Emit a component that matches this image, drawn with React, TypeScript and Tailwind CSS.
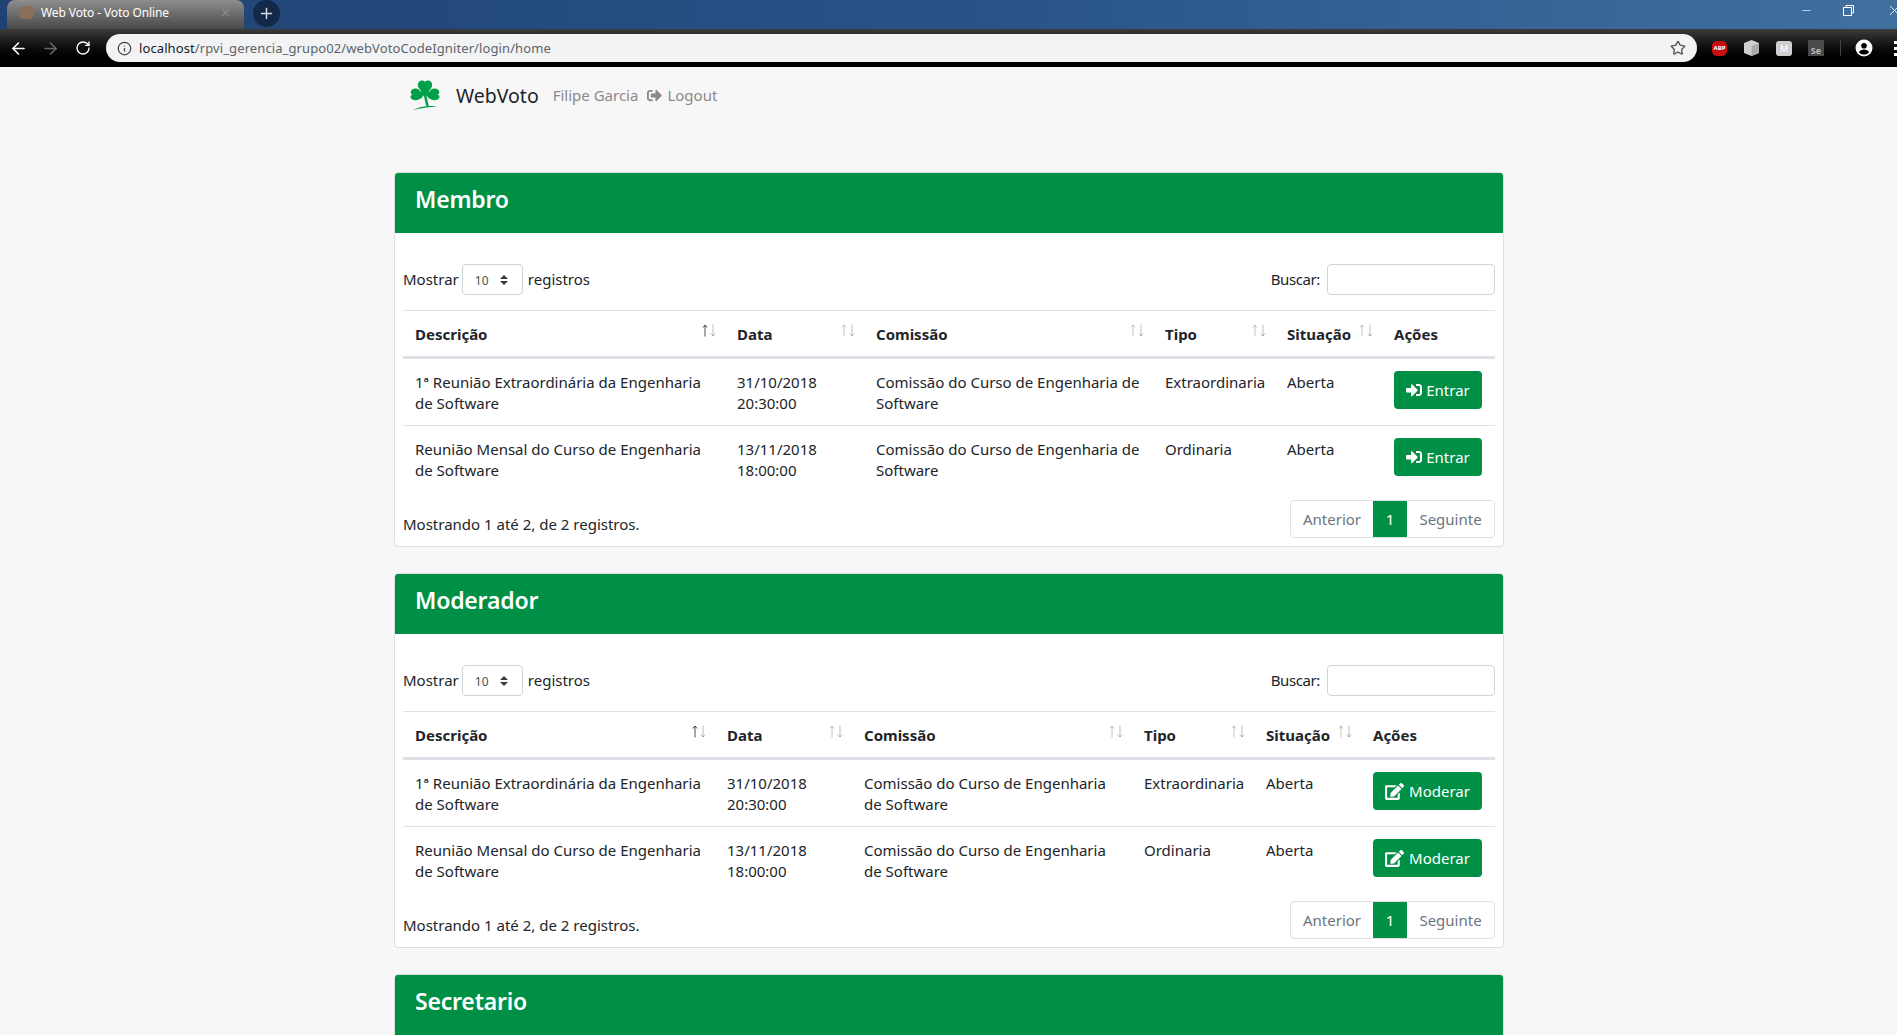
import { FaEdit, FaSignInAlt, FaSignOutAlt } from "react-icons/fa";
import { ArrowLeft, ArrowRight, Info, RotateCw, Star, X, Minus, Plus } from "lucide-react";

type Row = { desc: string; date: string; time: string; tipo: string };

const rows: Row[] = [
  { desc: "1ª Reunião Extraordinária da Engenharia de Software", date: "31/10/2018", time: "20:30:00", tipo: "Extraordinaria" },
  { desc: "Reunião Mensal do Curso de Engenharia de Software", date: "13/11/2018", time: "18:00:00", tipo: "Ordinaria" },
];

function Shamrock() {
  return (
    <svg width="32" height="32" viewBox="0 0 32 32" aria-hidden>
      <g fill="#00a04a">
        <ellipse cx="13" cy="6" rx="4.200" ry="4.600" />
        <ellipse cx="19" cy="6" rx="4.200" ry="4.600" />
        <path d="M10 8.500h12l-4 7.500h-4z" />
        <ellipse cx="6.500" cy="13" rx="4.800" ry="3.600" />
        <ellipse cx="6.500" cy="18" rx="5" ry="3.200" />
        <path d="M7 10l9 5-4 4.500-5 1.500z" />
        <ellipse cx="25.500" cy="13" rx="4.800" ry="3.600" />
        <ellipse cx="25.500" cy="18" rx="5" ry="3.200" />
        <path d="M25 10l-9 5 4 4.500 5 1.500z" />
        <path d="M14.500 15h2.500l2.800 12h-2.600z" />
        <path d="M4 31c4-2 8-3 13-3.700 4-.4 8-.4 11 .2-8 .6-16 1.800-24 3.500z" />
      </g>
    </svg>
  );
}

function SortArrows({ active }: { active?: boolean }) {
  return (
    <svg className="absolute top-[13px] right-[9px]" width="14" height="13" viewBox="0 0 14 13" fill="none" stroke="#212529" aria-hidden>
      <g opacity={active ? 0.8 : 0.25}>
        <path d="M3 12.500V1M.8 3.500 3 1l2.200 2.500" />
      </g>
      <g opacity="0.3">
        <path d="M11 .5V12M8.800 9.500 11 12l2.200-2.500" />
      </g>
    </svg>
  );
}

function Th({ label, active, sort = true }: { label: string; active?: boolean; sort?: boolean }) {
  return (
    <th className="relative border-t border-b-[3px] border-t-[#dee2e6] border-b-[#dee2e6] px-3 pt-[13px] pb-[11px] text-left align-bottom font-bold leading-[21px]">
      {label}
      {sort ? <SortArrows active={active} /> : null}
    </th>
  );
}

function DataCard({
  title,
  action,
  widths,
}: {
  title: string;
  action: "entrar" | "moderar";
  widths: string[];
}) {
  return (
    <section className="mb-[26px] w-[1110px] overflow-hidden rounded-[4px] border border-[#dfdfdf] bg-white">
      <h2 className="-mx-px -mt-px h-[61px] bg-[#009045] px-[21px] pt-[11px] text-[23px] leading-[32px] font-semibold tracking-[-0.2px] text-white">
        {title}
      </h2>
      <div className="px-[8px] pt-[31px] pb-[8px]">
        <div className="flex items-center justify-between">
          <div className="flex items-center gap-[3px]">
            <span>Mostrar</span>
            <div className="flex h-[31px] w-[61px] items-center justify-between rounded-[4px] border border-[#ced4da] pr-[14px] pl-[12px] text-[12px] text-[#495057]">
              <span className="pt-[2px]">10</span>
              <span className="flex flex-col gap-[2px]">
                <span className="h-0 w-0 border-x-[4px] border-b-[4px] border-x-transparent border-b-[#343a40]" />
                <span className="h-0 w-0 border-x-[4px] border-t-[4px] border-x-transparent border-t-[#343a40]" />
              </span>
            </div>
            <span className="ml-[2px]">registros</span>
          </div>
          <div className="flex items-center gap-[7px]">
            <span className="tracking-[-0.4px]">Buscar:</span>
            <input className="h-[31px] w-[168px] rounded-[4px] border border-[#ced4da] bg-white" />
          </div>
        </div>
        <table className="mt-[15px] w-[1092px] table-fixed border-collapse">
          <colgroup>
            <col className={widths[0]} />
            <col className={widths[1]} />
            <col className={widths[2]} />
            <col className={widths[3]} />
            <col className={widths[4]} />
            <col className={widths[5]} />
          </colgroup>
          <thead>
            <tr>
              <Th label="Descrição" active />
              <Th label="Data" />
              <Th label="Comissão" />
              <Th label="Tipo" />
              <Th label="Situação" />
              <Th label="Ações" sort={false} />
            </tr>
          </thead>
          <tbody>
            {rows.map((r, i) => (
              <tr key={r.date} className={i > 0 ? "border-t border-[#dee2e6]" : ""}>
                <td className="px-3 pt-[13px] pb-[11px] align-top">{r.desc}</td>
                <td className="px-3 pt-[13px] pb-[11px] align-top">
                  {r.date}
                  <br />
                  {r.time}
                </td>
                <td className="px-3 pt-[13px] pb-[11px] align-top">Comissão do Curso de Engenharia de Software</td>
                <td className="px-3 pt-[13px] pb-[11px] align-top">{r.tipo}</td>
                <td className="px-3 pt-[13px] pb-[11px] align-top">Aberta</td>
                <td className="px-3 py-[12px] align-top">
                  {action === "entrar" ? (
                    <button className="flex h-[38px] w-[88px] items-center justify-center gap-[4px] rounded-[4px] bg-[#009045] text-white">
                      <FaSignInAlt size={16} />
                      Entrar
                    </button>
                  ) : (
                    <button className="flex h-[38px] w-[109px] items-center justify-center gap-[5px] rounded-[4px] bg-[#009045] text-white">
                      <FaEdit size={19} />
                      Moderar
                    </button>
                  )}
                </td>
              </tr>
            ))}
          </tbody>
        </table>
        <div className="mt-[8px] flex items-start justify-between">
          <span className="pt-[14px]">Mostrando 1 até 2, de 2 registros.</span>
          <div className="flex h-[38px] overflow-hidden rounded-[4px] border border-[#dee2e6] text-[#6c757d]">
            <span className="flex w-[82px] items-center justify-center">Anterior</span>
            <span className="flex w-[34px] items-center justify-center bg-[#009045] text-white">1</span>
            <span className="flex w-[87px] items-center justify-center">Seguinte</span>
          </div>
        </div>
      </div>
    </section>
  );
}

function BrowserChrome() {
  return (
    <header className="h-[67px] bg-black font-['Noto_Sans',sans-serif]">
      <div className="flex h-[29px] bg-gradient-to-r from-[#1f4272] via-[#285287] to-[#41709f]">
        <div className="ml-[7px] flex h-[29px] w-[237px] items-center rounded-t-[8px] bg-gradient-to-b from-[#8e8e8e] to-[#4a4a4a] pr-[12px] pb-[4px] pl-[12px] text-[12px] text-white">
          <span className="mr-[7px] h-[13px] w-[15px] rounded-[5px] bg-[#8a7058]" />
          <span className="flex-1 tracking-[-0.1px]">Web Voto - Voto Online</span>
          <X size={13} className="text-[#8a8a8a]" />
        </div>
        <div className="ml-[9px] flex h-[27px] w-[27px] items-center justify-center rounded-full bg-[#12294a] text-[#d8dde5]">
          <Plus size={17} />
        </div>
        <div className="ml-auto flex h-[20px] items-center gap-[32px] text-white">
          <Minus size={13} strokeWidth={1.2} className="-mr-[2px]" />
          <svg width="11" height="11" viewBox="0 0 11 11" fill="none" stroke="currentColor" aria-hidden>
            <rect x="0.500" y="2.500" width="8" height="8" />
            <path d="M3 2.500V0.500h7.500V8H8.500" />
          </svg>
          <X size={17} strokeWidth={1.2} className="-mr-[6px]" />
        </div>
      </div>
      <div className="flex h-[38px] items-center bg-gradient-to-b from-[#3c3c3c] via-[#0d0d0d] to-black text-white">
        <ArrowLeft size={19} className="ml-[9px]" />
        <ArrowRight size={19} className="ml-[13px] text-[#6a6a6a]" />
        <RotateCw size={16} className="ml-[15px]" />
        <div className="ml-[15px] flex h-[28px] w-[1591px] items-center rounded-full bg-[#f1f3f4] pr-[11px] pl-[11px] text-[13px] text-[#5f6368]">
          <Info size={15} className="mr-[7px] text-[#444]" />
          <span className="flex-1 tracking-[0.1px]">
            <span className="text-[#202124]">localhost</span>/rpvi_gerencia_grupo02/webVotoCodeIgniter/login/home
          </span>
          <Star size={16} className="text-[#555]" />
        </div>
        <span className="ml-[15px] flex h-[15px] w-[15px] items-center justify-center rounded-[5px] bg-[#c70d0d] text-[6px] font-bold text-white">
          ABP
        </span>
        <svg className="ml-[17px]" width="15" height="16" viewBox="0 0 15 16" aria-hidden>
          <path d="M7.500 0 15 3v10l-7.500 3L0 13V3z" fill="#cfcfcf" />
          <path d="M7.500 6 15 3v10l-7.500 3z" fill="#a9a9a9" />
        </svg>
        <span className="ml-[17px] flex h-[15px] w-[16px] items-center justify-center rounded-[3px] bg-[#cfcfcf] text-[9px] text-white">
          M
        </span>
        <span className="ml-[16px] flex h-[16px] w-[16px] items-end justify-center bg-[#4a4a4a] text-[9px] leading-[11px] font-bold text-[#bbb]">
          Se
        </span>
        <span className="ml-[16px] h-[16px] w-px bg-[#444]" />
        <svg className="ml-[14px]" width="18" height="18" viewBox="0 0 18 18" aria-hidden>
          <circle cx="9" cy="9" r="8.500" fill="#fff" />
          <circle cx="9" cy="6.800" r="2.800" fill="#000" />
          <path d="M3.800 13.200c1.200-2 3-2.800 5.200-2.800s4 .8 5.200 2.800c-1.300 1.400-3.100 2.300-5.200 2.300s-3.900-.9-5.200-2.300z" fill="#000" />
        </svg>
        <span className="ml-[21px] flex flex-col gap-[3px]">
          <span className="h-[3px] w-[3px] bg-white" />
          <span className="h-[3px] w-[3px] bg-white" />
          <span className="h-[3px] w-[3px] bg-white" />
        </span>
      </div>
    </header>
  );
}

export default function App() {
  return (
    <div className="h-screen overflow-hidden bg-[#f7f7f7] font-['Noto_Sans',sans-serif] text-[15px] leading-[21px] text-[#212529]">
      <BrowserChrome />
      <div className="ml-[394px] w-[1110px]">
        <nav className="flex h-[105px] items-start pt-[12px] pl-[15px]">
          <Shamrock />
          <span className="mt-[2px] ml-[15px] text-[19.5px] leading-[30px]">WebVoto</span>
          <span className="mt-[6px] ml-[14px] flex items-center text-[#8a8a8a]">
            Filipe Garcia
            <FaSignOutAlt size={15} className="mr-[5px] ml-[9px]" />
            Logout
          </span>
        </nav>
        <DataCard
          title="Membro"
          action="entrar"
          widths={["w-[322px]", "w-[139px]", "w-[289px]", "w-[122px]", "w-[107px]", "w-[113px]"]}
        />
        <DataCard
          title="Moderador"
          action="moderar"
          widths={["w-[312px]", "w-[137px]", "w-[280px]", "w-[122px]", "w-[107px]", "w-[134px]"]}
        />
        <section className="w-[1110px] overflow-hidden rounded-t-[4px] border border-[#dfdfdf]">
          <h2 className="-mx-px -mt-px h-[61px] bg-[#009045] px-[21px] pt-[11px] text-[23px] leading-[32px] font-semibold tracking-[-0.2px] text-white">
            Secretario
          </h2>
        </section>
      </div>
    </div>
  );
}
